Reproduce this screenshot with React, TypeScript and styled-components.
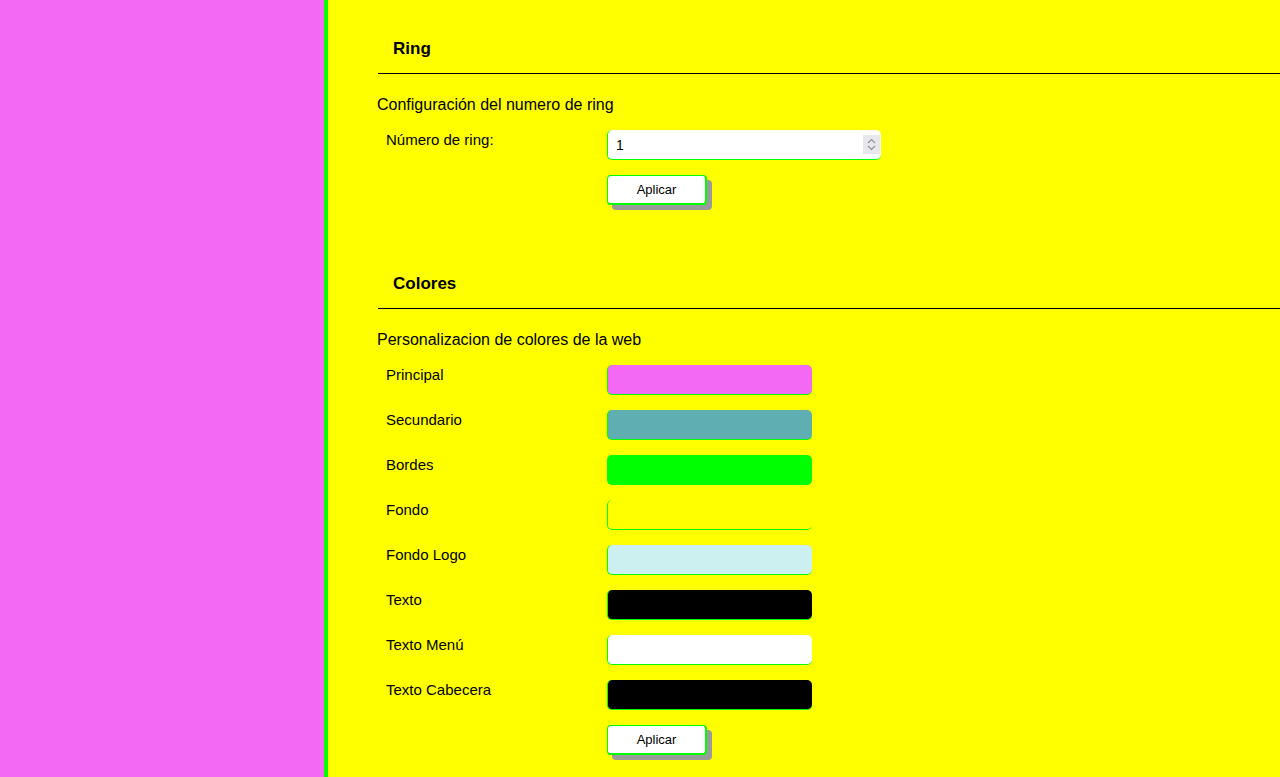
import React from "react";
import styled, { createGlobalStyle } from "styled-components";

const Global = createGlobalStyle`
  html, body { margin: 0; padding: 0; }
  body {
    font-family: "Liberation Sans", Arial, sans-serif;
    background: #ffff00;
    color: #000;
    overflow: hidden;
  }
  input[type=number]::-webkit-inner-spin-button,
  input[type=number]::-webkit-outer-spin-button { -webkit-appearance: none; margin: 0; }
`;

const Layout = styled.div`
  display: flex;
  width: 1280px;
  height: 777px;
  overflow: hidden;
`;

const Sidebar = styled.aside`
  width: 324px;
  flex: none;
  background: #f369f3;
  border-right: 4px solid #00ff00;
`;

const Main = styled.main`
  flex: 1;
  background: #ffff00;
  padding-left: 49px;
`;

const Section = styled.section<{ $first?: boolean }>`
  padding-top: ${(p) => (p.$first ? 24 : 54)}px;
`;

const Title = styled.h2`
  margin: 0 0 0 1px;
  height: 49px;
  line-height: 50px;
  padding-left: 15px;
  font-size: 17px;
  font-weight: bold;
  border-bottom: 1px solid #000;
`;

const Subtitle = styled.p`
  margin: 21px 0 15px 0;
  height: 20px;
  line-height: 20px;
  font-size: 16px;
`;

const Grid = styled.div`
  display: grid;
  grid-template-columns: 230px auto;
  row-gap: 15px;
  justify-items: start;
`;

const Label = styled.label`
  padding-left: 9px;
  line-height: 20px;
  font-size: 15px;
`;

const InputWrap = styled.div`
  position: relative;
  width: 274px;
  height: 30px;
`;

const NumberInput = styled.input`
  box-sizing: border-box;
  width: 100%;
  height: 100%;
  border: none;
  border-left: 1px solid #00ff00;
  border-bottom: 1px solid #00ff00;
  border-radius: 5px;
  background: #fff;
  padding: 0 8px;
  font-family: inherit;
  font-size: 14px;
  color: #000;
  outline: none;
`;

const Spinner = styled.span`
  position: absolute;
  right: 1px;
  top: 5px;
  width: 17px;
  height: 19px;
  background: #e8e8ec;
  display: flex;
  align-items: center;
  justify-content: center;
`;

const Swatch = styled.div<{ $color: string }>`
  box-sizing: border-box;
  width: 205px;
  height: 30px;
  background: ${(p) => p.$color};
  border-left: 1px solid #00ff00;
  border-bottom: 1px solid #00ff00;
  border-radius: 5px;
`;

const Button = styled.button`
  box-sizing: border-box;
  width: 100px;
  height: 30px;
  background: #fff;
  border: 1px solid #00ff00;
  border-right-width: 2px;
  border-bottom-width: 2px;
  border-radius: 4px;
  box-shadow: 5px 5px 0 #9a9a9a;
  font-family: inherit;
  font-size: 13px;
  color: #000;
  padding: 0;
  cursor: pointer;
`;

const Empty = styled.span``;

const colors: [string, string][] = [
  ["Principal", "#f369f3"],
  ["Secundario", "#5fafb2"],
  ["Bordes", "#00ff00"],
  ["Fondo", "#ffff00"],
  ["Fondo Logo", "#ccefef"],
  ["Texto", "#000000"],
  ["Texto Menú", "#ffffff"],
  ["Texto Cabecera", "#000000"],
];

export default function App() {
  return (
    <>
      <Global />
      <Layout>
        <Sidebar />
        <Main>
          <Section $first>
            <Title>Ring</Title>
            <Subtitle>Configuración del numero de ring</Subtitle>
            <Grid>
              <Label>Número de ring:</Label>
              <InputWrap>
                <NumberInput type="number" defaultValue={1} />
                <Spinner>
                  <svg width="9" height="13" viewBox="0 0 9 13">
                    <path d="M1 5 L4.5 1.5 L8 5" fill="none" stroke="#8f8f9a" strokeWidth="1.2" />
                    <path d="M1 8 L4.5 11.5 L8 8" fill="none" stroke="#8f8f9a" strokeWidth="1.2" />
                  </svg>
                </Spinner>
              </InputWrap>
              <Empty />
              <Button>Aplicar</Button>
            </Grid>
          </Section>
          <Section>
            <Title>Colores</Title>
            <Subtitle>Personalizacion de colores de la web</Subtitle>
            <Grid>
              {colors.map(([name, c]) => (
                <React.Fragment key={name}>
                  <Label>{name}</Label>
                  <Swatch $color={c} />
                </React.Fragment>
              ))}
              <Empty />
              <Button>Aplicar</Button>
            </Grid>
          </Section>
        </Main>
      </Layout>
    </>
  );
}
